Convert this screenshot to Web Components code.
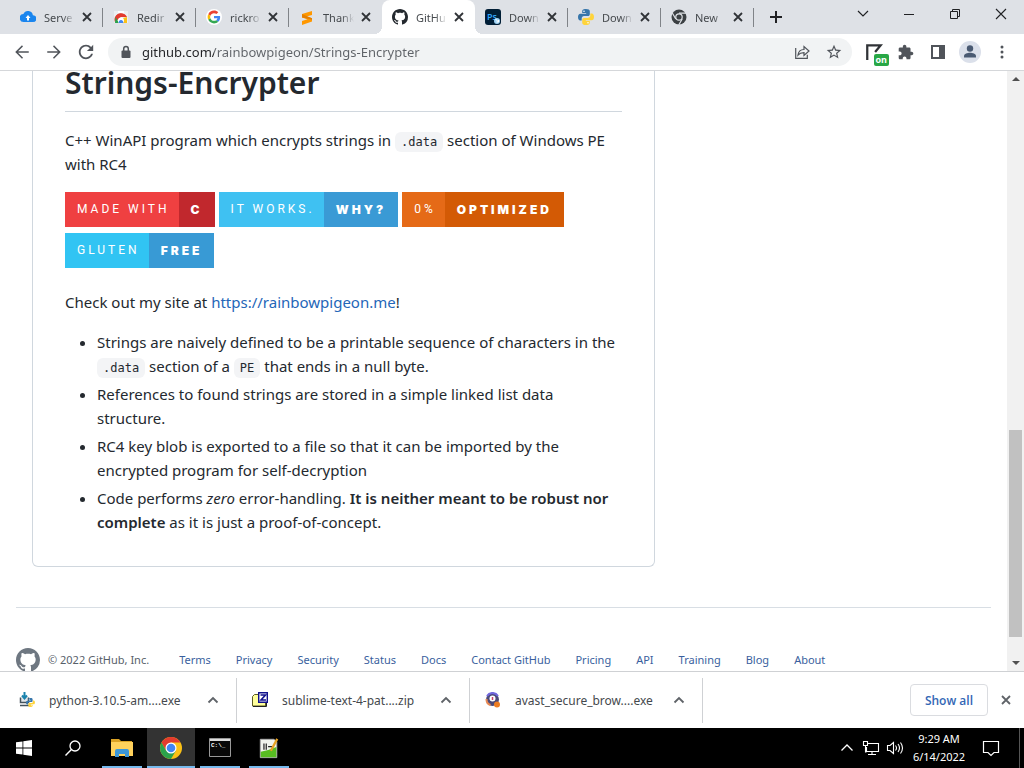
<!DOCTYPE html>
<html lang="en">
<head>
<meta charset="utf-8">
<title>Strings-Encrypter</title>
<style>
  body {
    margin: 0;
    height: 100vh;
    display: flex;
    flex-direction: column;
    overflow: hidden;
    background: white;
    color: #24292f;
    font-family: "Noto Sans", "Open Sans", sans-serif;
  }

  a {
    color: #2466b8;
    text-decoration: none;
  }

  site-footer a {
    color: #3a5f9e;
  }

  li + li {
    margin-top: 4px;
  }

  strong {
    font-weight: 600;
  }
</style>
</head>
<body>
  <tab-strip>
    <browser-tab icon="cloud">Serve</browser-tab>
    <browser-tab icon="store">Redir</browser-tab>
    <browser-tab icon="google">rickro</browser-tab>
    <browser-tab icon="sublime" last>Thank</browser-tab>
    <browser-tab icon="github" active>GitHu</browser-tab>
    <browser-tab icon="photoshop">Down</browser-tab>
    <browser-tab icon="python">Down</browser-tab>
    <browser-tab icon="chromeDark">New</browser-tab>
  </tab-strip>

  <nav-bar url="github.com/rainbowpigeon/Strings-Encrypter"></nav-bar>

  <page-view>
    <readme-box>
      <h1>Strings-Encrypter</h1>
      <p>C++ WinAPI program which encrypts strings in <inline-code>.data</inline-code> section of Windows PE with RC4</p>
      <badge-row>
        <shield-badge color="#ef4041" dark="#c1282d">MADE WITH<span slot="value">C</span></shield-badge>
        <shield-badge color="#3fc1f2" dark="#3a9ad5">IT WORKS.<span slot="value">WHY?</span></shield-badge>
        <shield-badge color="#e56a17" dark="#d35a05">0%<span slot="value">OPTIMIZED</span></shield-badge>
        <shield-badge color="#31c4f3" dark="#389ad5">GLUTEN<span slot="value">FREE</span></shield-badge>
      </badge-row>
      <p>Check out my site at <a href="https://rainbowpigeon.me">https://rainbowpigeon.me</a>!</p>
      <ul>
        <li>Strings are naively defined to be a printable sequence of characters in the <inline-code>.data</inline-code> section of a <inline-code>PE</inline-code> that ends in a null byte.</li>
        <li>References to found strings are stored in a simple linked list data structure.</li>
        <li>RC4 key blob is exported to a file so that it can be imported by the encrypted program for self-decryption</li>
        <li>Code performs <em>zero</em> error-handling. <strong>It is neither meant to be robust nor complete</strong> as it is just a proof-of-concept.</li>
      </ul>
    </readme-box>
    <site-footer slot="footer">
      <a href="#terms">Terms</a>
      <a href="#privacy">Privacy</a>
      <a href="#security">Security</a>
      <a href="#status">Status</a>
      <a href="#docs">Docs</a>
      <a href="#contact">Contact GitHub</a>
      <a href="#pricing">Pricing</a>
      <a href="#api">API</a>
      <a href="#training">Training</a>
      <a href="#blog">Blog</a>
      <a href="#about">About</a>
    </site-footer>
  </page-view>

  <download-shelf>
    <download-item icon="pyInstaller">python-3.10.5-am....exe</download-item>
    <download-item icon="zip">sublime-text-4-pat....zip</download-item>
    <download-item icon="avast">avast_secure_brow....exe</download-item>
  </download-shelf>

  <task-bar time="9:29 AM" date="6/14/2022">
    <task-button icon="windows" label="Start"></task-button>
    <task-button icon="search" label="Search"></task-button>
    <task-button icon="explorer" label="File Explorer" running></task-button>
    <task-button icon="chrome" label="Chrome" running active></task-button>
    <task-button icon="cmd" label="Command Prompt" running></task-button>
    <task-button icon="notepad" label="Notepad++" running></task-button>
  </task-bar>

<script>
const octocat = '<path fill="currentColor" d="M8 0C3.58 0 0 3.58 0 8c0 3.54 2.29 6.53 5.47 7.59.4.07.55-.17.55-.38 0-.19-.01-.82-.01-1.49-2.01.37-2.53-.49-2.69-.94-.09-.23-.48-.94-.82-1.13-.28-.15-.68-.52-.01-.53.63-.01 1.08.58 1.23.82.72 1.21 1.87.87 2.33.66.07-.52.28-.87.51-1.07-1.78-.2-3.64-.89-3.64-3.95 0-.87.31-1.59.82-2.15-.08-.2-.36-1.02.08-2.12 0 0 .67-.21 2.2.82.64-.18 1.32-.27 2-.27.68 0 1.36.09 2 .27 1.53-1.04 2.2-.82 2.2-.82.44 1.1.16 1.92.08 2.12.51.56.82 1.27.82 2.15 0 3.07-1.87 3.75-3.65 3.95.29.25.54.73.54 1.48 0 1.07-.01 1.93-.01 2.2 0 .21.15.46.55.38A8.01 8.01 0 0 0 16 8c0-4.42-3.58-8-8-8z"/>';
const pyTop = '<path fill="#3776ab" d="M7.9 0C4.6 0 4.2 1.4 4.2 2.3v1.8h4v.6H2.3C.9 4.7 0 6 0 8s.9 3.5 2.2 3.5h1.5V9.4c0-1.3 1-2.3 2.3-2.3h4c1 0 1.8-.8 1.8-1.9V2.300C11.800.9 10.500 0 7.900 0z"/><circle cx="6" cy="2.200" r=".8" fill="#fff"/>';
const pyBottom = '<path fill="#ffd43b" d="M8.100 16c3.300 0 3.700-1.400 3.700-2.300v-1.800h-4v-.6h5.900C15.100 11.300 16 10 16 8s-.9-3.500-2.200-3.500h-1.500v2.100c0 1.300-1 2.300-2.300 2.300H6c-1 0-1.800.8-1.800 1.900v2.900C4.200 15.100 5.500 16 8.100 16z"/><circle cx="10" cy="13.800" r=".8" fill="#fff"/>';

// [viewBox, markup]
const ICONS = {
  cloud: ['0 0 16 16', '<path fill="#1a85ee" d="M12.900 6.200A5 5 0 0 0 3.400 5 4 4 0 0 0 4 13h9a3.400 3.400 0 0 0-.1-6.800z"/><path fill="#fff" d="M8 6 5.500 9H7v2.500h2V9h1.500z"/>'],
  store: ['0 0 16 16', '<path fill="#eceff1" d="M1 2h14v12H1z"/><path fill="#fff" d="M5 2h6v2H5z"/><path fill="#e33b2e" d="M2 13a6.200 6.200 0 0 1 11.500-5H8z"/><path fill="#e33b2e" d="M2.500 8A6.500 6.500 0 0 1 14 8z"/><path fill="#2ba24c" d="M2.500 8 6 14H2z"/><path fill="#fbc116" d="M14 8v6H8l2-5z"/><circle cx="8" cy="11.500" r="3" fill="#fff"/><path fill="#4285f4" d="M5.800 14a2.300 2.300 0 1 1 4.400 0z"/>'],
  google: ['-6 -6 60 60', '<circle cx="24" cy="24" r="30" fill="#fff"/><path fill="#EA4335" d="M24 9.500c3.540 0 6.710 1.220 9.210 3.600l6.850-6.850C35.900 2.380 30.470 0 24 0 14.620 0 6.510 5.380 2.560 13.220l7.980 6.190C12.430 13.720 17.740 9.500 24 9.500z"/><path fill="#4285F4" d="M46.980 24.550c0-1.570-.15-3.090-.38-4.550H24v9.020h12.940c-.58 2.960-2.260 5.480-4.780 7.180l7.730 6c4.510-4.180 7.090-10.360 7.090-17.650z"/><path fill="#FBBC05" d="M10.530 28.590c-.48-1.450-.76-2.990-.76-4.590s.27-3.140.76-4.590l-7.980-6.190C.92 16.460 0 20.120 0 24s.92 7.540 2.560 10.780l7.970-6.190z"/><path fill="#34A853" d="M24 48c6.480 0 11.930-2.130 15.890-5.810l-7.730-6c-2.150 1.450-4.920 2.300-8.160 2.300-6.260 0-11.570-4.220-13.470-9.910l-7.980 6.190C6.510 42.620 14.620 48 24 48z"/>'],
  sublime: ['0 0 16 16', '<path fill="#ff9800" d="m3 5 10-3v4L7.500 7.600 13 9.300v3.200L3 16v-4l5.500-1.700L3 8.600z"/><path fill="#e57f00" d="m3 5 10 4.300v1.500L3 8.600z"/>'],
  github: ['0 0 16 16', octocat],
  photoshop: ['0 0 16 16', '<rect width="16" height="16" rx="3" fill="#001e36"/><text x="2" y="11" font-family="Open Sans" font-weight="600" font-size="9" fill="#31a8ff">Ps</text><circle cx="12" cy="12" r="3" fill="#9fd3f5"/><path d="m10.500 10 3 3m0-2v2h-2" stroke="#fff" fill="none"/>'],
  python: ['0 0 16 16', pyTop + pyBottom],
  chromeDark: ['0 0 16 16', '<circle cx="8" cy="8" r="7.500" fill="#3c4043"/><path d="M8 4.200h7M4.800 10 1.300 4M11.200 10 7.700 16" stroke="#dee1e6" stroke-width="1.200"/><circle cx="8" cy="8" r="3.800" fill="#dee1e6"/><circle cx="8" cy="8" r="2.600" fill="#3c4043"/>'],
  close: ['0 0 16 16', '<path d="m4 4 8 8m0-8-8 8" stroke="currentColor" stroke-width="1.800"/>'],
  plus: ['0 0 16 16', '<path d="M8 2v12M2 8h12" stroke="currentColor" stroke-width="2"/>'],
  winDown: ['0 0 16 16', '<path d="m3 5 5 5 5-5" fill="none" stroke="currentColor" stroke-width="1.200"/>'],
  winMin: ['0 0 16 16', '<path d="M3 8.500h10" stroke="currentColor"/>'],
  winMax: ['0 0 16 16', '<path d="M3.500 5.500h7v7h-7zM5.500 5.500v-2h7v7h-2" fill="none" stroke="currentColor"/>'],
  winClose: ['0 0 16 16', '<path d="m3 3 10 10m0-10L3 13" stroke="currentColor" stroke-width="1.100"/>'],
  back: ['0 0 24 24', '<path fill="currentColor" d="M21 11H6.800l6.500-6.500L12 3l-9 9 9 9 1.400-1.400L6.800 13H21z"/>'],
  forward: ['0 0 24 24', '<path fill="currentColor" d="M3 11h14.200l-6.500-6.500L12 3l9 9-9 9-1.400-1.400 6.600-6.600H3z"/>'],
  reload: ['2 2 20 20', '<path fill="currentColor" d="M17.650 6.350C16.200 4.900 14.210 4 12 4c-4.420 0-7.990 3.580-7.990 8s3.570 8 7.990 8c3.730 0 6.840-2.550 7.730-6h-2.080c-.82 2.330-3.040 4-5.650 4-3.310 0-6-2.690-6-6s2.690-6 6-6c1.660 0 3.140.69 4.220 1.780L13 11h7V4l-2.350 2.350z"/>'],
  lock: ['0 0 16 16', '<rect x="3.500" y="6.500" width="9" height="7.500" rx="1" fill="currentColor"/><path d="M5.700 7V4.700a2.300 2.300 0 0 1 4.600 0V7" fill="none" stroke="currentColor" stroke-width="1.500"/>'],
  share: ['0 0 16 16', '<path d="M1.700 4v10.300h11.600v-3.500M4 11c.5-4 2.800-5.500 6-5.500V2.500L15 7l-5 4.500V8.600C7.500 8.600 5.500 9.200 4 11z" fill="none" stroke="currentColor" stroke-width="1.200"/>'],
  star: ['1 1 22 22', '<path fill="currentColor" d="m22 9.240-7.190-.62L12 2 9.190 8.630 2 9.240l5.460 4.730L5.820 21 12 17.270 18.180 21l-1.630-7.030L22 9.240zM12 15.400l-3.760 2.270 1-4.280-3.320-2.880 4.380-.38L12 6.100l1.710 4.040 4.380.38-3.320 2.880 1 4.280L12 15.400z"/>'],
  redirector: ['0 0 16 16', '<path d="M2 15V2h12L9 8" fill="none" stroke="#303337" stroke-width="2"/>'],
  puzzle: ['1 0 23 23', '<path fill="currentColor" d="M20.500 11H19V7c0-1.100-.9-2-2-2h-4V3.500C13 2.120 11.880 1 10.500 1S8 2.120 8 3.500V5H4c-1.100 0-1.990.9-1.990 2v3.800H3.500c1.490 0 2.700 1.210 2.700 2.700s-1.210 2.700-2.700 2.700H2V20c0 1.100.9 2 2 2h3.800v-1.500c0-1.490 1.210-2.700 2.700-2.700s2.700 1.210 2.700 2.700V22H17c1.100 0 2-.9 2-2v-4h1.500c1.380 0 2.500-1.120 2.500-2.500S21.880 11 20.500 11z"/>'],
  panel: ['0 0 16 16', '<path fill="currentColor" fill-rule="evenodd" d="M1 1h14v14H1zm2 2v10h6V3z"/>'],
  avatar: ['0 0 22 22', '<circle cx="11" cy="11" r="11" fill="#dbe0ea"/><circle cx="11" cy="7.500" r="3.200" fill="#4a5a72"/><path fill="#4a5a72" d="M5 16.500v-1.300c0-2.400 3.500-3.400 6-3.400s6 1 6 3.400v1.300z"/>'],
  dots: ['0 0 16 16', '<g fill="currentColor"><circle cx="8" cy="3" r="1.500"/><circle cx="8" cy="8" r="1.500"/><circle cx="8" cy="13" r="1.500"/></g>'],
  scrollUp: ['0 0 16 16', '<path fill="#505050" d="m8 6 4 4H4z"/>'],
  scrollDown: ['0 0 16 16', '<path fill="#505050" d="m8 10 4-4H4z"/>'],
  chevronUp: ['0 0 16 16', '<path d="m3.500 10.500 4.500-4.500 4.500 4.500" fill="none" stroke="currentColor" stroke-width="1.800"/>'],
  pyInstaller: ['0 0 16 16', '<path d="M1.500 5.500v5h8v-5M1 13.500h11" fill="#dfe6ea" stroke="#44525c" stroke-width="1.500"/><path d="M5.500 0v5M3 3.500l2.500 3 2.500-3" fill="none" stroke="#1a83ad" stroke-width="2"/><g transform="translate(7 6) scale(.56)">' + pyTop + pyBottom + '</g>'],
  zip: ['0 0 16 16', '<path d="M.5 14V4.500l2-2H7L8.500 4.500h5V14z" fill="#ffff9c" stroke="#5c5c20"/><path d="M1 14.500h13.500V6" fill="none" stroke="#222"/><path fill="#fff" stroke="#10108c" stroke-width="1.400" d="M6.700.7h8.600v9.600H6.700z"/><path d="M8.500 3h5l-4.500 5h5" fill="none" stroke="#10108c" stroke-width="1.600"/>'],
  avast: ['0 0 16 16', '<circle cx="7.500" cy="7.500" r="6.500" fill="#4c4a78"/><path d="M2 4a6.500 6.500 0 0 1 11 0" stroke="#7167dd" stroke-width="2" fill="none"/><path d="M1.500 7a6 6 0 0 0 4 6" stroke="#e88954" stroke-width="2" fill="none"/><circle cx="7.500" cy="6.500" r="3" fill="#fff"/><path d="M7.500 5v3" stroke="#c84268" stroke-width="1.500"/><circle cx="12" cy="12.500" r="3" fill="#ed7d22"/>'],
  windows: ['0 0 16 16', '<path fill="#fff" d="m0 2.300 6.500-.9v6.200H0zM7.300 1.300 16 0v7.600H7.300zM0 8.400h6.500v6.200L0 13.700zM7.300 8.400H16V16l-8.700-1.300z"/>'],
  search: ['0 0 16 16', '<circle cx="10" cy="6" r="5" fill="none" stroke="#fff" stroke-width="1.300"/><path d="M6.400 9.600.5 15.500" stroke="#fff" stroke-width="1.400"/>'],
  explorer: ['0 0 22 20', '<path fill="#dba225" d="M0 1h8l2 2h11v4H0z"/><path fill="#ffd15c" d="M0 4h22v14H0z"/><path fill="#3c97d8" d="M4 19v-6q0-2 2-2h10q2 0 2 2v6h-4v-3H8v3z"/>'],
  chrome: ['0 0 22 22', '<circle cx="11" cy="11" r="11" fill="#fbc116"/><path fill="#e33b2e" d="M1.500 5.500a11 11 0 0 1 19 0H11L6.200 13.700z"/><path fill="#2ba24c" d="M1.500 5.500A11 11 0 0 0 11 22l4.800-8.300H6.200z"/><circle cx="11" cy="11" r="5.500" fill="#fff"/><circle cx="11" cy="11" r="4.300" fill="#4285f4"/>'],
  cmd: ['0 0 22 20', '<path fill="#080808" stroke="#999" d="M.5.500h21v18H.5z"/><path fill="#ddd" d="M1 1h20v2H1z"/><text x="2" y="9" font-family="Liberation Mono" font-weight="bold" font-size="6" fill="#fff">C:\\_</text>'],
  notepad: ['0 0 22 24', '<path fill="#f1f4ed" stroke="#aaa" d="M1.500 2.500h15l3 3v17h-18z"/><path fill="#58bd22" d="M2 16q8-1 17-5v11H2z"/><path d="M5.500 7v7M8 7v7M10 10.500h6" stroke="#222" stroke-width="1.300"/><path d="m13 15 7-13" stroke="#e8a323" stroke-width="2.500"/>'],
  trayUp: ['0 0 16 16', '<path d="m2.500 10.500 5.500-5.500 5.500 5.500" fill="none" stroke="#fff" stroke-width="1.300"/>'],
  network: ['0 0 18 16', '<path d="M6 3.500h10.500v8H4.500V7M10 12v3M6 14.500h8M1.500 1.500h4v4h-4zM3.500 6v6h1" fill="none" stroke="#fff" stroke-width="1.100"/>'],
  volume: ['0 0 18 16', '<path d="M1.500 5.500H4l3.500-3v11L4 10.500H1.500zM9.500 5.500q2 2.500 0 5M12 4q3 4 0 8M14.500 2.500q4 5.500 0 11" fill="none" stroke="#fff" stroke-width="1.100"/>'],
  action: ['0 0 18 18', '<path d="M1.500 2.500h15v11H12L9 16.500l-3-3H1.500z" fill="none" stroke="#fff" stroke-width="1.200"/>'],
};

class AppIcon extends HTMLElement {
  constructor() {
    super();
    this.attachShadow({ mode: 'open' });
  }

  connectedCallback() {
    const [box, markup] = ICONS[this.getAttribute('name')];
    this.shadowRoot.innerHTML = `
      <style>
        :host {
          display: block;
          flex: none;
          width: 16px;
          height: 16px;
        }

        svg {
          display: block;
          width: 100%;
          height: 100%;
        }
      </style>
      <svg viewBox="${box}" aria-hidden="true">${markup}</svg>
    `;
  }
}

customElements.define('app-icon', AppIcon);

class TabStrip extends HTMLElement {
  constructor() {
    super();
    this.attachShadow({ mode: 'open' });
    this.shadowRoot.innerHTML = `
      <style>
        :host {
          display: flex;
          flex: none;
          height: 34px;
          padding-left: 10px;
          background: #dee1e6;
          color: #202124;
        }

        button {
          display: grid;
          place-items: center;
          padding: 0;
          border: 0;
          background: none;
          color: inherit;
        }

        #new {
          width: 44px;
        }

        #controls {
          display: flex;
          margin-left: auto;
          height: 28px;
        }

        #controls button {
          width: 46px;
        }
      </style>
      <slot></slot>
      <button id="new" aria-label="New tab"><app-icon name="plus"></app-icon></button>
      <div id="controls">
        <button aria-label="Search tabs"><app-icon name="winDown"></app-icon></button>
        <button aria-label="Minimize"><app-icon name="winMin"></app-icon></button>
        <button aria-label="Restore"><app-icon name="winMax"></app-icon></button>
        <button aria-label="Close"><app-icon name="winClose"></app-icon></button>
      </div>
    `;
  }
}

customElements.define('tab-strip', TabStrip);

class BrowserTab extends HTMLElement {
  constructor() {
    super();
    this.attachShadow({ mode: 'open' });
    this.shadowRoot.innerHTML = `
      <style>
        :host {
          display: flex;
          position: relative;
          flex: 0 1 93px;
          min-width: 0;
          box-sizing: border-box;
          align-items: center;
          gap: 8px;
          padding: 0 8px 0 10px;
          color: #45494d;
          font-size: 11px;
        }

        :host::after {
          content: "";
          position: absolute;
          right: 0;
          top: 8px;
          width: 1px;
          height: 19px;
          background: #808388;
        }

        :host([last])::after {
          display: none;
        }

        :host([active]) {
          background: white;
          border-radius: 8px 8px 0 0;
        }

        /* flared feet of the selected tab */
        :host([active])::before,
        :host([active])::after {
          content: "";
          position: absolute;
          top: auto;
          bottom: 0;
          width: 8px;
          height: 8px;
        }

        :host([active])::before {
          left: -8px;
          background: radial-gradient(circle at 0 0, transparent 8px, white 8px);
        }

        :host([active])::after {
          right: -8px;
          background: radial-gradient(circle at 100% 0, transparent 8px, white 8px);
        }

        app-icon {
          color: #24292f;
        }

        #title {
          flex: 1;
          min-width: 0;
          overflow: hidden;
          white-space: nowrap;
          -webkit-mask-image: linear-gradient(90deg, black 60%, transparent);
          mask-image: linear-gradient(90deg, black 60%, transparent);
        }

        button {
          margin-left: -4px;
          padding: 0;
          border: 0;
          background: none;
        }

        button app-icon {
          color: #303337;
        }
      </style>
      <app-icon name="${this.getAttribute('icon')}"></app-icon>
      <span id="title"><slot></slot></span>
      <button aria-label="Close tab"><app-icon name="close"></app-icon></button>
    `;
  }
}

customElements.define('browser-tab', BrowserTab);

class NavBar extends HTMLElement {
  constructor() {
    super();
    this.attachShadow({ mode: 'open' });
    this.shadowRoot.innerHTML = `
      <style>
        :host {
          display: flex;
          flex: none;
          box-sizing: border-box;
          height: 37px;
          align-items: center;
          padding: 0 6px;
          border-bottom: 1px solid #d5d7da;
          color: #50545a;
        }

        button {
          display: grid;
          position: relative;
          flex: none;
          place-items: center;
          width: 32px;
          height: 28px;
          padding: 0;
          border: 0;
          background: none;
          color: inherit;
        }

        .large {
          width: 18px;
          height: 18px;
        }

        #avatar {
          width: 22px;
          height: 22px;
        }

        #omnibox {
          display: flex;
          flex: 1;
          align-items: center;
          height: 28px;
          margin: 0 6px;
          padding: 0 2px 0 10px;
          border-radius: 14px;
          background: #f1f3f4;
        }

        input {
          flex: 1;
          min-width: 0;
          margin: 0 0 0 8px;
          padding: 0;
          border: 0;
          outline: 0;
          font: 13px "Noto Sans", "Open Sans", sans-serif;
          /* host in black, path in grey */
          background: linear-gradient(90deg, #202124 72px, #5f6368 72px);
          -webkit-background-clip: text;
          background-clip: text;
          color: transparent;
        }

        #badge {
          position: absolute;
          right: 1px;
          bottom: 0;
          padding: 0 2px;
          border-radius: 2px;
          background: #28a745;
          color: white;
          font: bold 9px/12px "Open Sans", sans-serif;
        }
      </style>
      <button aria-label="Back"><app-icon class="large" name="back"></app-icon></button>
      <button aria-label="Forward"><app-icon class="large" name="forward"></app-icon></button>
      <button aria-label="Reload"><app-icon class="large" name="reload"></app-icon></button>
      <div id="omnibox">
        <app-icon name="lock"></app-icon>
        <input type="text" aria-label="Address">
        <button aria-label="Share"><app-icon name="share"></app-icon></button>
        <button aria-label="Bookmark"><app-icon name="star"></app-icon></button>
      </div>
      <button aria-label="Redirector"><app-icon class="large" name="redirector"></app-icon><span id="badge">on</span></button>
      <button aria-label="Extensions"><app-icon name="puzzle"></app-icon></button>
      <button aria-label="Side panel"><app-icon name="panel"></app-icon></button>
      <button aria-label="Profile"><app-icon id="avatar" name="avatar"></app-icon></button>
      <button aria-label="Menu"><app-icon name="dots"></app-icon></button>
    `;
    this.shadowRoot.querySelector('input').value = this.getAttribute('url');
  }
}

customElements.define('nav-bar', NavBar);

class PageView extends HTMLElement {
  constructor() {
    super();
    this.attachShadow({ mode: 'open' });
    this.shadowRoot.innerHTML = `
      <style>
        :host {
          display: flex;
          flex: 1;
          min-height: 0;
        }

        main {
          flex: 1;
          min-width: 0;
          overflow: hidden;
          padding: 0 16px;
        }

        #columns {
          display: grid;
          grid-template-columns: minmax(0, 1fr) 296px;
          gap: 24px;
          padding: 0 16px 40px;
        }

        #scrollbar {
          display: flex;
          flex: none;
          flex-direction: column;
          align-items: center;
          width: 17px;
          background: #f1f1f1;
        }

        #before { flex: 342; }
        #after { flex: 18; }

        #thumb {
          flex: 206;
          width: 13px;
          background: #c1c1c1;
        }
      </style>
      <main>
        <div id="columns"><slot></slot></div>
        <slot name="footer"></slot>
      </main>
      <div id="scrollbar">
        <app-icon name="scrollUp"></app-icon>
        <div id="before"></div>
        <div id="thumb"></div>
        <div id="after"></div>
        <app-icon name="scrollDown"></app-icon>
      </div>
    `;
  }
}

customElements.define('page-view', PageView);

class ReadmeBox extends HTMLElement {
  constructor() {
    super();
    this.attachShadow({ mode: 'open' });
    this.shadowRoot.innerHTML = `
      <style>
        :host {
          display: block;
          padding: 0 32px 32px;
          border: 1px solid #d0d7de;
          border-top: 0;
          border-radius: 0 0 6px 6px;
          font-size: 15px;
          line-height: 24px;
        }

        ::slotted(h1) {
          margin: 0 0 16px;
          padding-bottom: 16px;
          border-bottom: 1px solid #d0d7de;
          font-size: 30px;
          font-weight: 600;
          line-height: 24px;
        }

        ::slotted(p) {
          margin: 0 0 16px;
        }

        ::slotted(ul) {
          margin: 0;
          padding: 0 0 0 32px;
        }
      </style>
      <slot></slot>
    `;
  }
}

customElements.define('readme-box', ReadmeBox);

class InlineCode extends HTMLElement {
  constructor() {
    super();
    this.attachShadow({ mode: 'open' });
    this.shadowRoot.innerHTML = `
      <style>
        :host {
          display: inline;
        }

        code {
          padding: 3px 6px;
          border-radius: 6px;
          background: #f3f4f6;
          font: 12px "DejaVu Sans Mono", monospace;
        }
      </style>
      <code><slot></slot></code>
    `;
  }
}

customElements.define('inline-code', InlineCode);

class BadgeRow extends HTMLElement {
  constructor() {
    super();
    this.attachShadow({ mode: 'open' });
    this.shadowRoot.innerHTML = `
      <style>
        :host {
          display: flex;
          flex-wrap: wrap;
          gap: 6px 4px;
          margin-bottom: 22px;
        }
      </style>
      <slot></slot>
    `;
  }
}

customElements.define('badge-row', BadgeRow);

class ShieldBadge extends HTMLElement {
  constructor() {
    super();
    this.attachShadow({ mode: 'open' });
    this.shadowRoot.innerHTML = `
      <style>
        :host {
          display: flex;
          height: 35px;
          color: white;
          font: 12px/35px Roboto, sans-serif;
          letter-spacing: 3px;
        }

        #label {
          padding: 0 9px 0 12px;
          background: ${this.getAttribute('color')};
        }

        #value {
          padding: 0 12px;
          background: ${this.getAttribute('dark')};
          font-family: Inter, sans-serif;
          font-weight: 900;
        }
      </style>
      <span id="label"><slot></slot></span>
      <span id="value"><slot name="value"></slot></span>
    `;
  }
}

customElements.define('shield-badge', ShieldBadge);

class SiteFooter extends HTMLElement {
  constructor() {
    super();
    this.attachShadow({ mode: 'open' });
    this.shadowRoot.innerHTML = `
      <style>
        :host {
          display: flex;
          align-items: center;
          padding-top: 40px;
          border-top: 1px solid #d8dee4;
          color: #57606a;
          font-size: 11px;
          line-height: 24px;
          white-space: nowrap;
        }

        app-icon {
          width: 24px;
          height: 24px;
          margin-right: 8px;
          color: #6e7781;
        }

        nav {
          display: flex;
          gap: 25px;
          margin-left: 30px;
        }
      </style>
      <app-icon name="github"></app-icon>
      <span>© 2022 GitHub, Inc.</span>
      <nav><slot></slot></nav>
    `;
  }
}

customElements.define('site-footer', SiteFooter);

class DownloadShelf extends HTMLElement {
  constructor() {
    super();
    this.attachShadow({ mode: 'open' });
    this.shadowRoot.innerHTML = `
      <style>
        :host {
          display: flex;
          flex: none;
          box-sizing: border-box;
          align-items: center;
          height: 57px;
          padding: 0 10px 0 4px;
          border-top: 1px solid #cfd1d4;
          background: white;
        }

        button {
          padding: 0;
          border: 0;
          background: none;
          color: #5f6368;
        }

        #all {
          height: 32px;
          margin: 0 10px 0 auto;
          padding: 0 14px;
          border: 1px solid #dadce0;
          border-radius: 4px;
          color: #3367b5;
          font: 600 12px "Open Sans", "Noto Sans", sans-serif;
        }
      </style>
      <slot></slot>
      <button id="all">Show all</button>
      <button aria-label="Close"><app-icon name="close"></app-icon></button>
    `;
  }
}

customElements.define('download-shelf', DownloadShelf);

class DownloadItem extends HTMLElement {
  constructor() {
    super();
    this.attachShadow({ mode: 'open' });
    this.shadowRoot.innerHTML = `
      <style>
        :host {
          display: flex;
          flex: 0 1 233px;
          box-sizing: border-box;
          align-items: center;
          height: 45px;
          padding: 0 15px;
          border-right: 1px solid #cfd1d4;
          color: #45494d;
          font-size: 12px;
          white-space: nowrap;
        }

        span {
          flex: 1;
          margin-left: 14px;
        }

        button {
          padding: 0;
          border: 0;
          background: none;
          color: #5f6368;
        }
      </style>
      <app-icon name="${this.getAttribute('icon')}"></app-icon>
      <span><slot></slot></span>
      <button aria-label="Options"><app-icon name="chevronUp"></app-icon></button>
    `;
  }
}

customElements.define('download-item', DownloadItem);

class TaskBar extends HTMLElement {
  constructor() {
    super();
    this.attachShadow({ mode: 'open' });
    this.shadowRoot.innerHTML = `
      <style>
        :host {
          display: flex;
          flex: none;
          height: 40px;
          background: black;
          color: white;
        }

        #apps,
        #tray {
          display: flex;
          gap: 1px;
        }

        #tray {
          gap: 0;
          margin-left: auto;
        }

        button {
          display: grid;
          place-items: center;
          width: 24px;
          padding: 0;
          border: 0;
          background: none;
        }

        button app-icon {
          width: 18px;
        }

        #clock {
          width: 64px;
          padding: 2px 0;
          font-size: 11px;
          line-height: 18px;
          text-align: center;
        }

        #action {
          width: 40px;
        }

        #action app-icon {
          height: 18px;
        }

        #desktop {
          width: 5px;
          margin-left: 8px;
          border-left: 1px solid #555;
        }
      </style>
      <div id="apps"><slot></slot></div>
      <div id="tray">
        <button aria-label="Hidden icons"><app-icon name="trayUp"></app-icon></button>
        <button aria-label="Network"><app-icon name="network"></app-icon></button>
        <button aria-label="Volume"><app-icon name="volume"></app-icon></button>
        <div id="clock">${this.getAttribute('time')}<br>${this.getAttribute('date')}</div>
        <button id="action" aria-label="Notifications"><app-icon name="action"></app-icon></button>
        <button id="desktop" aria-label="Show desktop"></button>
      </div>
    `;
  }
}

customElements.define('task-bar', TaskBar);

class TaskButton extends HTMLElement {
  constructor() {
    super();
    this.attachShadow({ mode: 'open' });
    this.shadowRoot.innerHTML = `
      <style>
        :host {
          display: flex;
          justify-content: center;
          width: 48px;
        }

        button {
          display: grid;
          place-items: center;
          width: 40px;
          padding: 0;
          border: 0;
          background: none;
        }

        :host([running]) button {
          padding-top: 2px;
          border-bottom: 2px solid #76b9ed;
        }

        :host([running]) app-icon {
          width: 22px;
          height: 22px;
        }

        :host([active]) button {
          width: 48px;
          background: #333;
        }
      </style>
      <button aria-label="${this.getAttribute('label')}"><app-icon name="${this.getAttribute('icon')}"></app-icon></button>
    `;
  }
}

customElements.define('task-button', TaskButton);
</script>
</body>
</html>
